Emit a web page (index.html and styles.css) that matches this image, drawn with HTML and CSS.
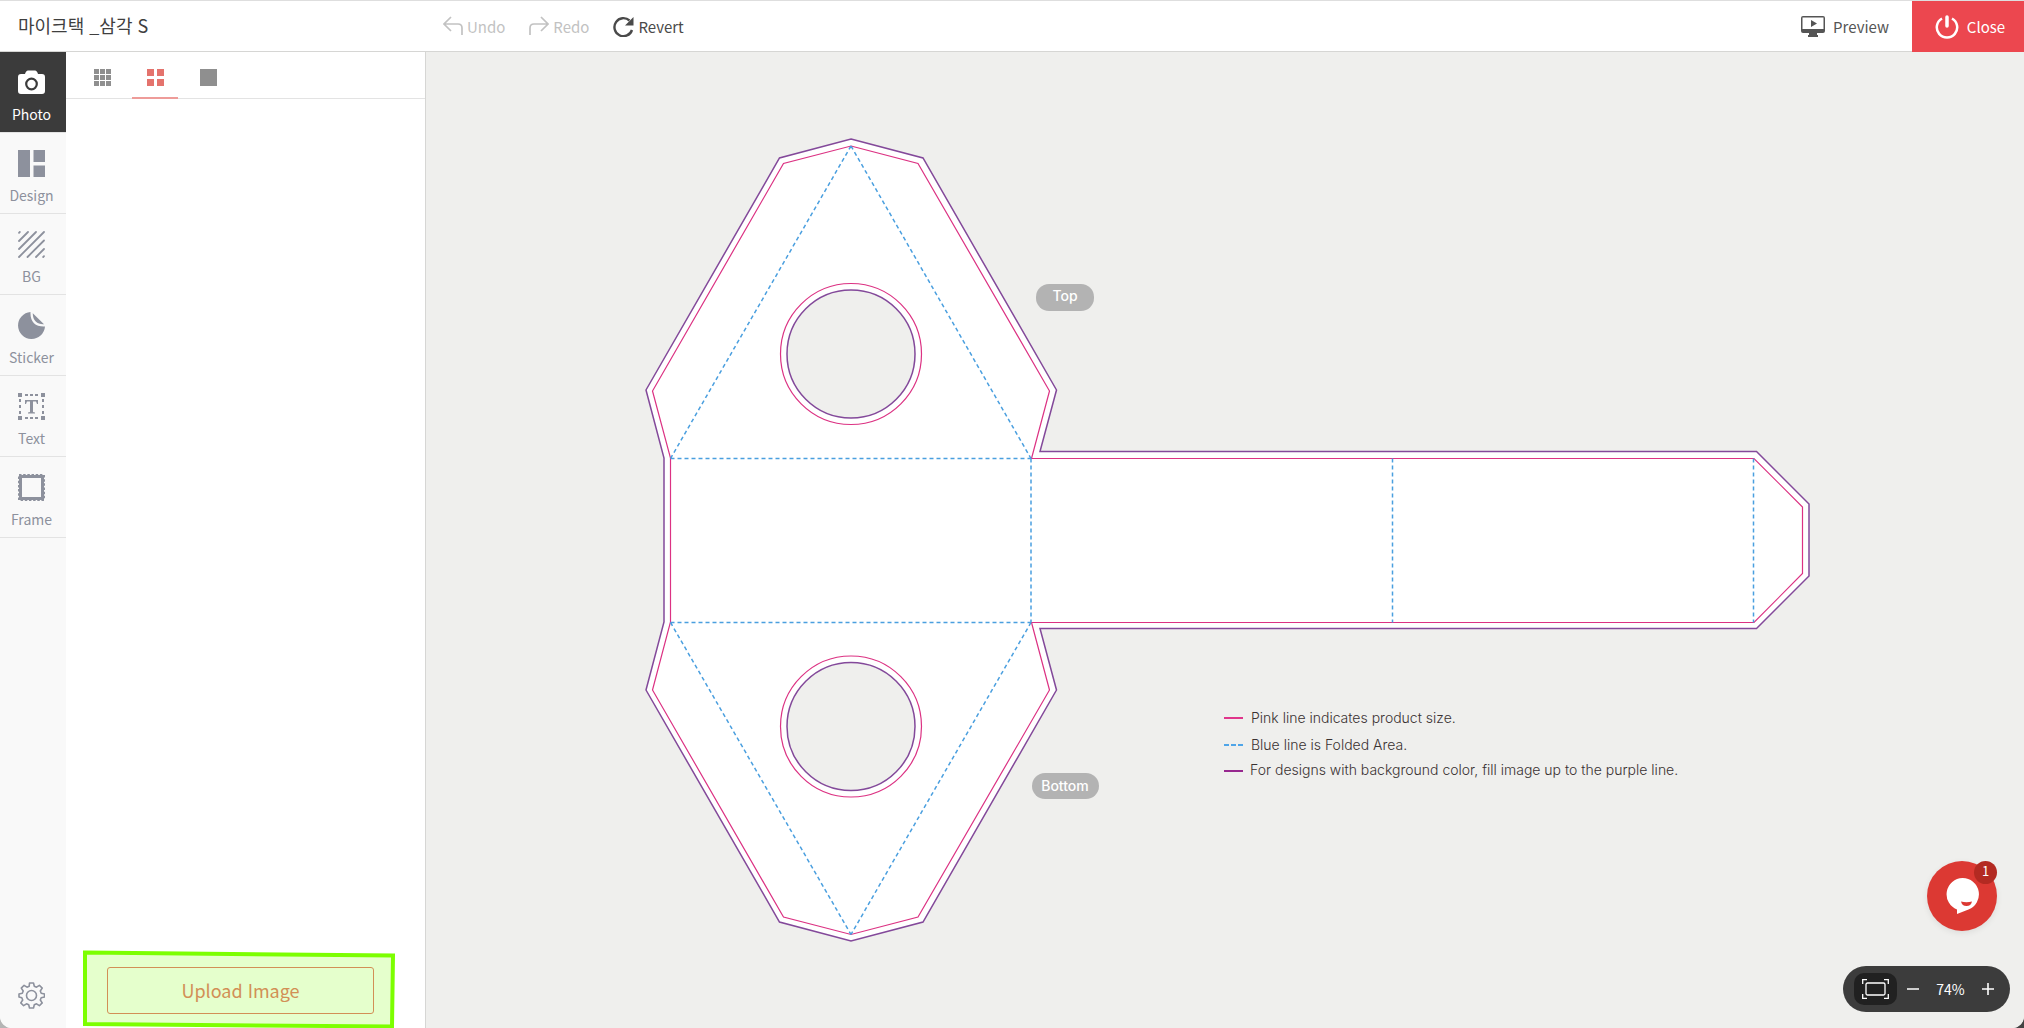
FILE: index.html
```html
<!DOCTYPE html>
<html lang="ko">
<head>
    <meta charset="UTF-8">
    <meta name="viewport" content="width=device-width, initial-scale=1.0">
    <title>마이크택 _삼각 S</title>
    <link rel="stylesheet" href="styles.css">
</head>
<body>
    <div class="app">
        <header class="topbar">
            <h1 class="title">마이크택 _삼각 S</h1>
            <div class="history">
                <button class="tool" disabled>
                    <svg width="20" height="20" viewBox="0 0 20 20" fill="none" stroke="currentColor" stroke-width="1.700"><path d="M8 1 1 8l7 7M1 8h14q4 0 4 4v7"/></svg>
                    Undo
                </button>
                <button class="tool" disabled>
                    <svg width="20" height="20" viewBox="0 0 20 20" fill="none" stroke="currentColor" stroke-width="1.700"><path d="M12 1l7 7-7 7M19 8H5q-4 0-4 4v7"/></svg>
                    Redo
                </button>
                <button class="tool">
                    <svg width="21" height="21" viewBox="0 0 21 21"><path d="M19 14A9 9 0 1 1 16.500 4.500" fill="none" stroke="currentColor" stroke-width="2.400"/><path d="M20.500 1v8.500H12z" fill="currentColor"/></svg>
                    Revert
                </button>
            </div>
            <button class="preview">
                <svg width="24" height="21" viewBox="0 0 24 21"><path d="M2 0h20q2 0 2 2v13q0 2-2 2h-6v2h1v2H7v-2h1v-2H2q-2 0-2-2V2Q0 0 2 0zm-.5 1.500v11.500h21V1.500zM10 4l6 3.500L10 11z" fill="currentColor" fill-rule="evenodd"/></svg>
                Preview
            </button>
            <button class="close">
                <svg width="24" height="24" viewBox="0 0 24 24" fill="none" stroke="currentColor" stroke-width="2.500"><path d="M7 3.500a10.200 10.200 0 1 0 10 0"/><path d="M12 2v9" stroke-width="3.500" stroke-linecap="round"/></svg>
                Close
            </button>
        </header>

        <main class="workspace">
            <nav class="sidebar">
                <button class="menu active">
                    <svg width="27" height="27" viewBox="0 0 27 27"><path d="M3 5h4q1-3.500 3-3.500h7q2 0 3 3.500h4q3 0 3 3v14q0 3-3 3H3q-3 0-3-3V8q0-3 3-3z" fill="currentColor"/><circle cx="13.500" cy="15" r="5.300" fill="none" stroke="#3b3b3b" stroke-width="2.200"/></svg>
                    Photo
                </button>
                <button class="menu">
                    <svg width="27" height="27" viewBox="0 0 27 27" fill="currentColor"><path d="M0 0h12v27H0zM15.500 0H27v12H15.500zM15.500 15.500H27V27H15.500z"/></svg>
                    Design
                </button>
                <button class="menu">
                    <svg width="27" height="27" viewBox="0 0 27 27" fill="none" stroke="currentColor" stroke-width="1.800" stroke-linecap="round"><path d="M1 1.800 1.800 1M1 10l9-9M1 18 18 1M1 26 26 1M9.500 26 26 9.500M18 26l8-8M25.200 26l.8-.8"/></svg>
                    BG
                </button>
                <button class="menu">
                    <svg width="27" height="27" viewBox="0 0 27 27" fill="currentColor"><path d="M12.500 0A13.500 13.500 0 1 0 27 14.500C17.500 15 12 10 12.500 0zM14.800 1.200 26 12.300C19.500 12.700 14.500 8.500 14.800 1.200z"/></svg>
                    Sticker
                </button>
                <button class="menu">
                    <svg width="27" height="27" viewBox="0 0 27 27" fill="currentColor"><path d="M0 0h4v4H0zM23 0h4v4h-4zM0 23h4v4H0zM23 23h4v4h-4zM7 7h13v4h-1l-1-2.500h-3V19l2 .5v1h-7v-1l2-.5V8.500H9L8 11H7z"/><path d="M7 2h3M12 2h3M17 2h3M7 25h3M12 25h3M17 25h3M2 6v3M2 12v3M2 18v3M25 6v3M25 12v3M25 18v3" stroke="currentColor" stroke-width="2"/></svg>
                    Text
                </button>
                <button class="menu">
                    <svg width="27" height="27" viewBox="0 0 27 27" fill="none" stroke="currentColor"><path d="M2.500 2.500h22v22h-22z" stroke-width="3"/><path d="M1 1h25v25H1z" stroke-width="2" stroke-dasharray="2.500 1.670"/></svg>
                    Frame
                </button>
                <button class="settings" aria-label="Settings">
                    <svg width="27" height="27" viewBox="0 0 27 27" fill="none" stroke="currentColor" stroke-width="1.600" stroke-linejoin="round"><path d="M11.500 1h4l.8 3.300 2.200.9 2.900-1.900 2.800 2.800-1.900 2.900.9 2.200 3.300.8v3l-3.300.8-.9 2.200 1.900 2.900-2.800 2.800-2.900-1.900-2.200.9-.8 3.300h-4l-.8-3.300-2.200-.9-2.900 1.900-2.800-2.800 1.900-2.900-.9-2.200L1 15v-3l3.300-.8.9-2.200-1.900-2.900 2.800-2.800L9 5.200l2.200-.9z"/><circle cx="13.500" cy="13.500" r="5"/></svg>
                </button>
            </nav>

            <section class="panel">
                <div class="views">
                    <button class="view" aria-label="Small thumbnails">
                        <svg width="17" height="17" viewBox="0 0 17 17" fill="currentColor"><path d="M0 0h5v5H0zM6 0h5v5H6zM12 0h5v5h-5zM0 6h5v5H0zM6 6h5v5H6zM12 6h5v5h-5zM0 12h5v5H0zM6 12h5v5H6zM12 12h5v5h-5z"/></svg>
                    </button>
                    <button class="view selected" aria-label="Medium thumbnails">
                        <svg width="17" height="17" viewBox="0 0 17 17" fill="currentColor"><path d="M0 0h7v7H0zM10 0h7v7h-7zM0 10h7v7H0zM10 10h7v7h-7z"/></svg>
                    </button>
                    <button class="view" aria-label="Large thumbnails">
                        <svg width="17" height="17" viewBox="0 0 17 17" fill="currentColor"><path d="M0 0h17v17H0z"/></svg>
                    </button>
                </div>
                <div class="upload-area">
                    <button class="upload">Upload Image</button>
                    <svg class="highlight" viewBox="0 0 314 78" preserveAspectRatio="none"><path d="M3 2.500 311 5.500 310 76.500 3 74z"/></svg>
                </div>
            </section>

            <section class="stage">
                <svg class="artboard" viewBox="426 52 1598 976">
                    <path class="bleed" d="M851 139 923 158 1056.500 390 1040 451.500H1756.500L1809 504V576L1756.500 628.500H1040L1056.500 690 923 922 851 941 779.500 922 646 690 664 622V458L646 390 779.500 158z"/>
                    <path class="cut" d="M851 146 918 163.500 1049.500 391 1031.500 458.500H1754L1802.500 507V573.500L1754 622.500H1031.500L1049.500 690 918 917 851 934.500 783.500 917 652.500 690 670.500 622V458L652.500 391 783.500 163.500z"/>
                    <path class="fold" d="M851 146 670.500 458.500M851 146 1031 458.500M670.500 458.500H1031M670.500 622.500H1031M670.500 622.500 851 934.500M1031 622.500 851 934.500M1031 458.500V622.500M1392.500 458.500V622.500M1753.500 458.500V622.500"/>
                    <circle class="cut" cx="851" cy="354" r="70.500"/>
                    <circle class="hole" cx="851" cy="354" r="64"/>
                    <circle class="cut" cx="851" cy="726.500" r="70.500"/>
                    <circle class="hole" cx="851" cy="726.500" r="64"/>

                    <rect class="pill" x="1036" y="284" width="58" height="27" rx="13"/>
                    <text class="pill-text" x="1065" y="301">Top</text>
                    <rect class="pill" x="1032" y="773" width="67" height="26" rx="13"/>
                    <text class="pill-text" x="1065" y="791">Bottom</text>

                    <path class="key pink" d="M1224 718h19"/>
                    <text class="note" x="1251" y="723">Pink line indicates product size.</text>
                    <path class="key blue" d="M1224 745h19"/>
                    <text class="note" x="1251" y="750">Blue line is Folded Area.</text>
                    <path class="key purple" d="M1224 771h19"/>
                    <text class="note" x="1250" y="775">For designs with background color, fill image up to the purple line.</text>
                </svg>

                <button class="chat" aria-label="Chat">
                    <svg width="33" height="36" viewBox="0 0 33 36"><path d="M16.500 0a16.300 16.300 0 0 1 6 31.500L11 36v-4.500A16.300 16.300 0 0 1 16.500 0z" fill="#fff"/><path d="M15 23.500q5.500 1.500 11 0-1 4.500-5.500 4.500T15 23.500z" fill="#dc3933"/></svg>
                    <span class="badge">1</span>
                </button>

                <div class="zoombar">
                    <button class="fit" aria-label="Fit to screen">
                        <svg width="27" height="20" viewBox="0 0 27 20" fill="none" stroke="currentColor" stroke-width="1.300"><path d="M5 .7H.7V5M22 .7h4.300V5M5 19.300H.7V15M22 19.300h4.300V15"/><rect x="4" y="4" width="19" height="12" rx="1.500"/></svg>
                    </button>
                    <button class="step" aria-label="Zoom out">
                        <svg width="12" height="12" viewBox="0 0 12 12" stroke="currentColor" stroke-width="1.600"><path d="M0 6h12"/></svg>
                    </button>
                    <span class="percent">74%</span>
                    <button class="step" aria-label="Zoom in">
                        <svg width="12" height="12" viewBox="0 0 12 12" stroke="currentColor" stroke-width="1.600"><path d="M0 6h12M6 0v12"/></svg>
                    </button>
                </div>
            </section>
        </main>
    </div>
</body>
</html>
```
FILE: styles.css
```css
* {
    box-sizing: border-box;
}
html {
    background: linear-gradient(to right, #b5b5b5, #444);
}
body {
    margin: 0;
    font-family: "Noto Sans CJK KR", sans-serif;
    font-size: 15px;
    color: #3f3f3f;
}
button {
    padding: 0;
    border: none;
    background: none;
    color: inherit;
    font: inherit;
    cursor: pointer;
}
svg {
    display: block;
    flex: none;
}
.app {
    display: flex;
    flex-direction: column;
    height: 100vh;
    border-radius: 0 0 12px 12px;
    overflow: hidden;
    background: white;
}

/* top bar */
.topbar {
    display: flex;
    flex: none;
    height: 52px;
    border-top: 1px solid #dedede;
    border-bottom: 1px solid #d6d6d4;
}
.title {
    width: 426px;
    margin: 0;
    padding-left: 18px;
    font-size: 18px;
    font-weight: 400;
    line-height: 48px;
}
.history {
    display: flex;
    flex: 1;
    gap: 24px;
    padding-left: 17px;
}
.tool {
    display: flex;
    align-items: center;
    gap: 4px;
    color: #4a4a4a;
}
.tool:disabled {
    color: #c2c2c2;
    cursor: default;
}
.preview {
    display: flex;
    align-items: center;
    gap: 8px;
    padding-right: 23px;
    color: #555;
}
.close {
    display: flex;
    align-items: center;
    justify-content: center;
    gap: 8px;
    width: 112px;
    margin-bottom: -1px;
    padding-left: 4px;
    background: #ec474f;
    color: white;
}

.workspace {
    display: flex;
    flex: 1;
    min-height: 0;
}

/* left menu */
.sidebar {
    display: flex;
    flex-direction: column;
    width: 66px;
    background: #f9f9f9;
    color: #8d919d;
}
.menu {
    display: flex;
    flex-direction: column;
    align-items: center;
    gap: 6px;
    height: 81px;
    padding: 17px 3px 0 0;
    border-bottom: 1px solid #e3e3e3;
    font-size: 14px;
    line-height: 24px;
}
.menu.active {
    background: #3b3b3b;
    color: white;
}
.settings {
    margin: auto 0 19px 18px;
    width: 27px;
}

/* image panel */
.panel {
    display: flex;
    flex-direction: column;
    justify-content: space-between;
    width: 360px;
    border-right: 1px solid #d6d6d4;
}
.views {
    display: flex;
    gap: 7px;
    padding-left: 13px;
    border-bottom: 1px solid #e3e3e3;
}
.view {
    display: flex;
    justify-content: center;
    width: 46px;
    height: 47px;
    margin-bottom: -1px;
    padding-top: 17px;
    border-bottom: 2px solid transparent;
    color: #8f8f8f;
}
.view.selected {
    border-color: #ee9c99;
    color: #e4736d;
}
.upload-area {
    position: relative;
    padding: 0 51px 14px 41px;
}
.upload {
    display: block;
    width: 100%;
    height: 47px;
    padding-bottom: 2px;
    border: 1px solid #e8736c;
    border-radius: 3px;
    color: #e8736c;
    font-size: 18px;
}
.highlight {
    position: absolute;
    left: 16px;
    bottom: 0;
    width: 314px;
    height: 78px;
    fill: rgba(127, 255, 0, 0.2);
    stroke: #7cff00;
    stroke-width: 4;
    pointer-events: none;
}

/* drawing area */
.stage {
    position: relative;
    flex: 1;
    min-width: 0;
    background: #efefed;
}
.artboard {
    width: 100%;
    height: 100%;
}
.bleed {
    fill: white;
    stroke: #83499a;
    stroke-width: 1.5;
}
.hole {
    fill: #efefed;
    stroke: #83499a;
    stroke-width: 1.5;
}
.cut {
    fill: none;
    stroke: #dc3283;
    stroke-width: 1.2;
}
.fold {
    fill: none;
    stroke: #4a9fdf;
    stroke-width: 1.5;
    stroke-dasharray: 4 3;
}
.pill {
    fill: #b3b3b3;
}
.pill-text {
    fill: white;
    font-family: Inter, sans-serif;
    font-size: 14px;
    font-weight: 500;
    text-anchor: middle;
}
.key {
    stroke-width: 2;
}
.pink {
    stroke: #e0358b;
}
.blue {
    stroke: #4fa5e8;
    stroke-dasharray: 5 2;
}
.purple {
    stroke: #97288f;
}
.note {
    fill: #3a3232;
    font-family: Inter, sans-serif;
    font-size: 14px;
    font-weight: 300;
}

.chat {
    display: flex;
    align-items: center;
    justify-content: center;
    position: absolute;
    right: 27px;
    bottom: 97px;
    width: 70px;
    height: 70px;
    border-radius: 50%;
    background: #dc3933;
    box-shadow: 0 2px 6px rgba(0, 0, 0, 0.08);
}
.badge {
    position: absolute;
    top: 0;
    right: 0;
    width: 23px;
    height: 23px;
    border-radius: 50%;
    background: #b32a22;
    color: white;
    font-size: 13px;
    line-height: 20px;
}
.zoombar {
    display: flex;
    align-items: center;
    position: absolute;
    right: 14px;
    bottom: 16px;
    width: 167px;
    height: 46px;
    padding: 0 16px 0 11px;
    border-radius: 23px;
    background: #3c3c3c;
    color: white;
}
.fit {
    display: flex;
    align-items: center;
    justify-content: center;
    width: 43px;
    height: 32px;
    margin-right: 10px;
    border-radius: 10px;
    background: #212121;
}
.percent {
    flex: 1;
    text-align: center;
    font-size: 14px;
}
```
